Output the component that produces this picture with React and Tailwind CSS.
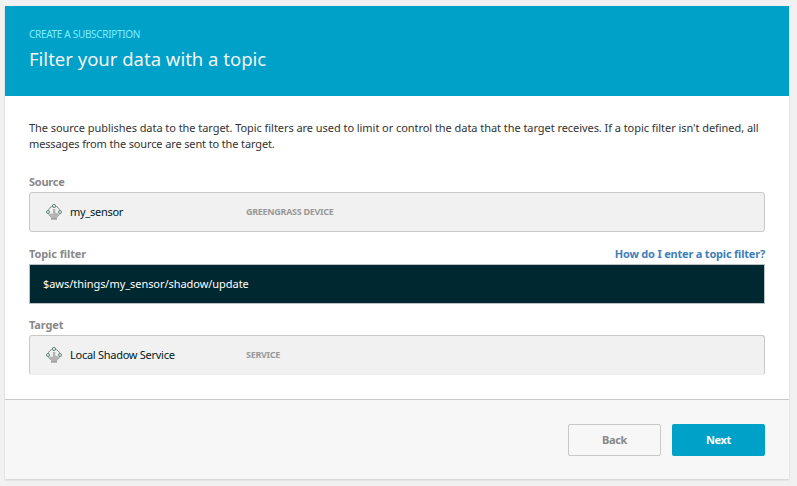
function DeviceIcon() {
  return (
    <svg className="block h-4 w-4 shrink-0" viewBox="0 0 16 16" fill="none">
      <circle cx="8" cy="7.8" r="5.8" stroke="#858988" strokeWidth="1" />
      <path d="M6.9 5h2.4v3.6l3 .9v2.7L11 14H5.2L4.4 12 3.8 9.4l3.1.4z" fill="#b4b4b4" />
      <path d="M5 14.8h6" stroke="#a0a0a0" strokeWidth="1.8" />
      <circle cx="8" cy="2" r="1.6" fill="#e2f3ec" stroke="#66857b" strokeWidth="1" />
      <circle cx="2" cy="8" r="1.5" fill="#e2f3ec" stroke="#66857b" strokeWidth="1" />
      <circle cx="14" cy="8" r="1.5" fill="#e2f3ec" stroke="#66857b" strokeWidth="1" />
    </svg>
  );
}

function Resource({ name, kind, className = "" }) {
  return (
    <div className={`flex h-10 items-center rounded-[3px] border border-[#c8c8c8] bg-[#f1f1f1] pl-4 ${className}`}>
      <DeviceIcon />
      <span className="ml-2 w-44 whitespace-nowrap text-[11px] tracking-[-0.27px] text-[#001a22]">{name}</span>
      <span className="whitespace-nowrap text-[9px] font-bold tracking-[-0.3px] text-[#999]">{kind}</span>
    </div>
  );
}

export default function App() {
  return (
    <div className="h-[486px] w-[797px] overflow-hidden bg-[#f1f1f1] pl-[5px] pt-[6px] font-['Noto_Sans','Open_Sans',sans-serif]">
      <main className="flex h-[473px] w-[784px] flex-col bg-white shadow-[0_1px_2px_rgba(0,0,0,0.15)]">
        <header className="h-[90px] shrink-0 bg-[#00a1c9] px-6 pt-5">
          <p className="h-4 whitespace-nowrap text-[10px] leading-4 tracking-[-0.31px] text-[#7df0ff]">CREATE A SUBSCRIPTION</p>
          <h1 className="mt-[3px] whitespace-nowrap text-[18.5px] leading-7 text-[#f4f4f4]">Filter your data with a topic</h1>
        </header>
        <section className="flex-1 px-6 pt-6 text-[11px] leading-4">
          <p className="whitespace-nowrap tracking-[-0.053px] text-[#333]">
            The source publishes data to the target. Topic filters are used to limit or control the data that the target receives. If a topic filter isn't defined, all
            <br />
            <span className="tracking-[-0.13px]">messages from the source are sent to the target.</span>
          </p>
          <h2 className="mb-[2px] mt-[22px] font-bold tracking-[-0.25px] text-[#888]">Source</h2>
          <Resource name="my_sensor" kind="GREENGRASS DEVICE" />
          <div className="mb-[2px] mt-[14px] flex justify-between font-bold">
            <h2 className="tracking-[-0.1px] text-[#888]">Topic filter</h2>
            <a className="tracking-[-0.2px] text-[#3f7fba]">How do I enter a topic filter?</a>
          </div>
          <div className="flex h-10 items-center border border-[#b9c3c6] bg-[#002830] pl-[13px] text-white">
            <span className="tracking-[-0.05px]">$aws/things/my_sensor/shadow/update</span>
          </div>
          <h2 className="mb-[2px] mt-[13px] font-bold tracking-[-0.15px] text-[#888]">Target</h2>
          <Resource name="Local Shadow Service" kind="SERVICE" className="border-b-[#ededed]" />
        </section>
        <footer className="flex h-20 shrink-0 justify-end gap-[11px] border-t border-[#c8c8c8] bg-[#f7f7f7] pr-6 pt-6 text-[11px] font-bold">
          <button className="h-8 w-[93px] rounded-[2px] border border-[#c8c8c8] tracking-[-0.4px] text-[#888]">Back</button>
          <button className="h-8 w-[93px] rounded-[2px] bg-[#00a1c9] tracking-[-0.3px] text-white">Next</button>
        </footer>
      </main>
    </div>
  );
}
